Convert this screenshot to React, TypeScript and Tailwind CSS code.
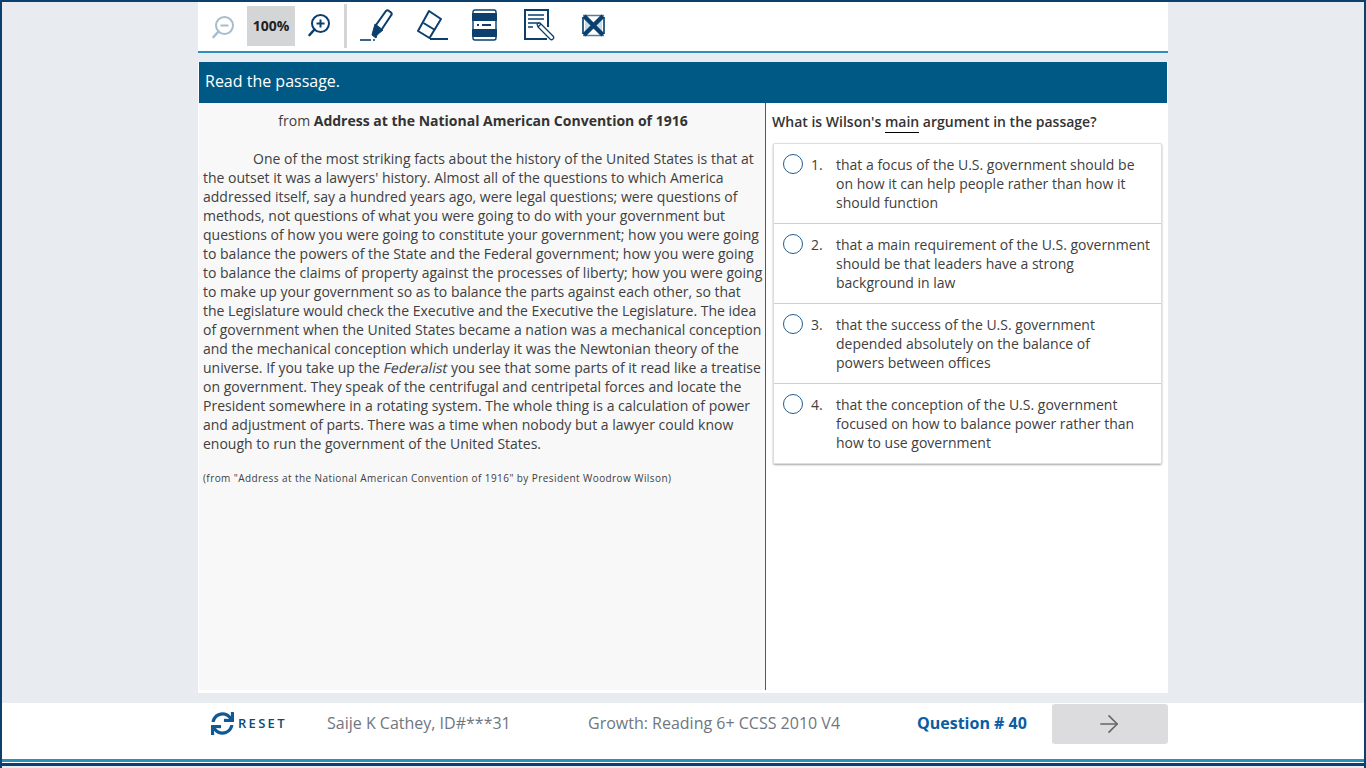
import React from 'react';
import { ArrowRight } from 'lucide-react';
import { FaSync } from 'react-icons/fa';

const NAVY = '#0a3f6e';

const answerLines = [
  ["that a focus of the U.S. government should be", "on how it can help people rather than how it", "should function"],
  ["that a main requirement of the U.S. government", "should be that leaders have a strong", "background in law"],
  ["that the success of the U.S. government", "depended absolutely on the balance of", "powers between offices"],
  ["that the conception of the U.S. government", "focused on how to balance power rather than", "how to use government"],
];

const ZoomIcon = ({ plus, color }: { plus?: boolean; color: string }) => (
  <svg width="24" height="24" viewBox="0 0 24 24" fill="none" stroke={color} strokeWidth="2">
    <circle cx="13.5" cy="10.5" r="8.5" />
    <path d="M7.5 16.5 2.5 22" strokeWidth="2.6" strokeLinecap="round" />
    <path d="M9.5 10.5h8" />
    {plus && <path d="M13.5 6.5v8" />}
  </svg>
);

const HighlighterIcon = () => (
  <svg width="34" height="34" viewBox="0 0 34 34" fill="none" stroke={NAVY}>
    <path d="M1 32h11" strokeWidth="1.6" />
    <path d="M14 32h2" strokeWidth="1.6" />
    <path d="m17 17 10-14q1.500-1.500 3 0l2 1.500q1.500 1.500 0 3L23 21" strokeWidth="2" />
    <path d="m14 23 2-7 8 6-6 5-1 3-4-3z" fill={NAVY} strokeWidth="1" />
  </svg>
);

const EraserIcon = () => (
  <svg width="32" height="34" viewBox="0 0 32 34" fill="none" stroke={NAVY} strokeWidth="2">
    <path d="M13 3 25 11 13.500 30 2 23z" strokeLinejoin="round" />
    <path d="M7.500 15 19 22" />
    <path d="M14 31h18" />
  </svg>
);

const NotecardIcon = () => (
  <svg width="27" height="32" viewBox="0 0 27 32" fill="none">
    <rect x="2" y="1" width="23" height="30" rx="2" stroke={NAVY} strokeWidth="1.400" />
    <rect x="1" y="4" width="25" height="8" rx="1" fill={NAVY} />
    <rect x="1" y="20" width="25" height="8" rx="1" fill={NAVY} />
    <path d="M6 16h2M11 16h9" stroke={NAVY} strokeWidth="2" />
  </svg>
);

const NotesIcon = () => (
  <svg width="32" height="32" viewBox="0 0 32 32" fill="none" stroke={NAVY}>
    <path d="M24 18V1H1v29h22" strokeWidth="2" />
    <path d="M4 6h16M4 10h16M4 14h12M4 18h5" strokeWidth="1.500" />
    <path d="m13 15 3-1 13 13q1.500 2 0 3-1.500 1.500-3 0L14 18z" strokeWidth="1.300" fill="#fff" />
    <path d="m14 18 3-3" strokeWidth="1.300" />
  </svg>
);

const ReferenceIcon = () => (
  <svg width="23" height="23" viewBox="0 0 23 23" fill="none" stroke={NAVY}>
    <path d="M3 6 8 11.500 3 17zM20 6l-5 5.500 5 5.500z" fill="#c9dbe8" stroke="none" />
    <path d="M1 3v17M22 3v17" stroke="#2f648f" strokeWidth="2" />
    <path d="M1 1.500h21M1 21.500h21" stroke="#4f7fa5" strokeWidth="1.500" />
    <path d="M2 2 21 21M21 2 2 21" strokeWidth="4.500" />
  </svg>
);

export default function App() {
  return (
    <div className="h-screen w-full overflow-hidden flex flex-col bg-[#e8ebf0] border-l-2 border-r-2 border-t-2 border-[#0a3f6e] text-[#404040] text-[14px] leading-[19px] font-['Open_Sans',sans-serif]">
      <div className="w-[970px] ml-[196px] h-[51px] shrink-0 bg-white border-b-2 border-[#2a8fbd] flex items-start">
        <div className="w-[49px] h-[44px] mt-[3px] flex items-center justify-center">
          <ZoomIcon color="#a9bccb" />
        </div>
        <div className="w-[48px] h-[40px] mt-[4px] pb-px bg-[#d4d5d7] flex items-center justify-center font-bold text-[14px] text-[#222222]">
          100%
        </div>
        <div className="w-[49px] h-[44px] mt-[1px] pr-[2px] flex items-center justify-center">
          <ZoomIcon plus color={NAVY} />
        </div>
        <div className="w-[3px] h-[44px] mt-[2px] bg-[#d4d5d7] mr-[12px]" />
        <div className="flex items-center h-[44px] mt-[1px]">
          <div className="w-[34px] mr-[23px]"><HighlighterIcon /></div>
          <div className="w-[32px] mr-[23px]"><EraserIcon /></div>
          <div className="w-[27px] mr-[26px]"><NotecardIcon /></div>
          <div className="w-[32px] mr-[26px]"><NotesIcon /></div>
          <ReferenceIcon />
        </div>
      </div>

      <div className="w-[970px] ml-[196px] h-[9px] shrink-0" />

      <div className="w-[970px] ml-[196px] h-[631px] shrink-0 bg-white px-px flex flex-col">
        <div className="h-[41px] shrink-0 bg-[#005984] text-white text-[16px] flex items-center pl-[6px] pb-[2px]">
          Read the passage.
        </div>
        <div className="flex flex-1 min-h-0">
          <div className="w-[567px] shrink-0 bg-[#f8f8f8] border-r border-[#4a5a6a] mb-[3px] pl-[4px] pr-[2px] pt-[8px]">
            <p className="text-center">
              from <span className="font-bold text-[#333333]">Address at the National American Convention of 1916</span>
            </p>
            <p className="mt-[19px] indent-[50px]">
              One of the most striking facts about the history of the United States is that at the outset it was a lawyers' history. Almost all of the questions to which America addressed itself, say a hundred years ago, were legal questions; were questions of methods, not questions of what you were going to do with your government but questions of how you were going to constitute your government; how you were going to balance the powers of the State and the Federal government; how you were going to balance the claims of property against the processes of liberty; how you were going to make up your government so as to balance the parts against each other, so that the Legislature would check the Executive and the Executive the Legislature. The idea of government when the United States became a nation was a mechanical conception and the mechanical conception which underlay it was the Newtonian theory of the universe. If you take up the <span className="inline-block indent-0 -skew-x-12">Federalist</span> you see that some parts of it read like a treatise on government. They speak of the centrifugal and centripetal forces and locate the President somewhere in a rotating system. The whole thing is a calculation of power and adjustment of parts. There was a time when nobody but a lawyer could know enough to run the government of the United States.
            </p>
            <p className="mt-[18px] text-[10px] leading-[14px] tracking-[0.42px]">
              (from "Address at the National American Convention of 1916" by President Woodrow Wilson)
            </p>
          </div>
          <div className="flex-1 pl-[6px] pr-[5px] pt-[9px]">
            <p className="font-semibold text-[#333333]">
              What is Wilson's <span className="border-b border-black pb-px">main</span> argument in the passage?
            </p>
            <div className="mt-[12px] ml-px border border-[#dddddd] rounded-[2px] shadow-[0_1px_2px_rgba(0,0,0,0.35)]">
              {answerLines.map((lines, index) => (
                <div key={index} className="h-[80px] border-t first:border-t-0 first:h-[79px] border-[#cfcfcf] flex pl-[9px] pt-[10px]">
                  <span className="w-[20px] h-[20px] shrink-0 rounded-full border-[1.5px] border-[#1f5b8e] bg-white" />
                  <span className="w-[33px] pl-[8px] pt-px shrink-0">{index + 1}.</span>
                  <span className="pt-px whitespace-nowrap">
                    {lines.map((line) => (
                      <span key={line} className="block">{line}</span>
                    ))}
                  </span>
                </div>
              ))}
            </div>
          </div>
        </div>
      </div>

      <div className="h-[10px] shrink-0" />

      <div className="h-[56px] shrink-0 bg-white flex items-start">
        <div className="ml-[209px] w-[116px] h-[40px] flex items-center">
          <FaSync className="w-[23px] h-[23px] text-[#0f5a94]" />
          <span className="ml-[4px] text-[13px] font-semibold tracking-[2.3px] text-[#0a4a7c]">RESET</span>
        </div>
        <div className="w-[261px] h-[40px] flex items-center text-[16px] text-[#6f7680]">Saije K Cathey, ID#***31</div>
        <div className="w-[329px] h-[40px] flex items-center text-[16px] text-[#6f7680]">Growth: Reading 6+ CCSS 2010 V4</div>
        <div className="w-[135px] h-[40px] flex items-center text-[16px] font-bold text-[#0a5ca3]">Question # 40</div>
        <div className="w-[116px] h-[40px] mt-[1px] pr-[2px] bg-[#dcdcde] rounded-[3px] flex items-center justify-center text-[#666666]">
          <ArrowRight className="w-[28px] h-[28px]" strokeWidth={1.4} />
        </div>
      </div>

      <div className="h-[3px] shrink-0 bg-[#2a8fbd]" />
      <div className="h-[1px] shrink-0 bg-white" />
      <div className="h-[3px] shrink-0 bg-[#0a3f6e]" />
      <div className="h-[2px] shrink-0 bg-[#e8ebf0]" />
    </div>
  );
}
